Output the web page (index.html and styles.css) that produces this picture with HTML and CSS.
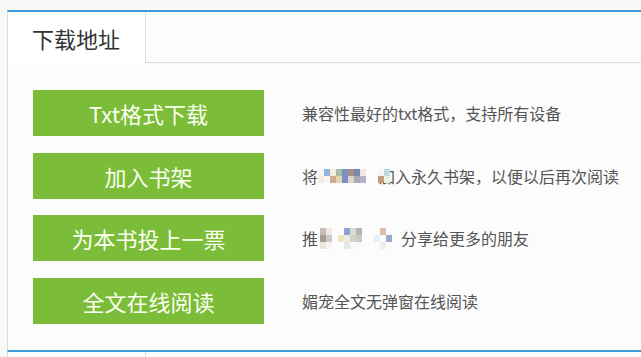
FILE: index.html
```html
<!DOCTYPE html>
<html lang="zh-CN">
<head>
<meta charset="utf-8">
<title>下载地址</title>
<link rel="stylesheet" href="styles.css">
</head>
<body>
<div class="panel first">
  <div class="tabs"><div class="tab">下载地址</div></div>
  <div class="content">
    <div class="row">
      <a class="btn" href="#">Txt格式下载</a>
      <span class="desc">兼容性最好的txt格式，支持所有设备</span>
    </div>
    <div class="row">
      <a class="btn" href="#">加入书架</a>
      <span class="desc"><span>将</span><span class="mosaic m-a">
        <i class="c-f6"></i><i class="c-8d"></i><i class="c-f2"></i><i class="c-a9"></i><i class="c-79"></i><i class="c-a3"></i><i class="c-7a"></i><i class="c-ed"></i><i class="c-ff"></i><i class="c-ff"></i><i class="c-f6"></i><i class="c-bc"></i>
        <i class="c-f4"></i><i class="c-f8"></i><i class="c-d2"></i><i class="c-e6"></i><i class="c-78"></i><i class="c-da"></i><i class="c-a8"></i><i class="c-b2"></i><i class="c-ff"></i><i class="c-ff"></i><i class="c-c9"></i><i class="c-e9"></i>
      </span><span>加入永久书架，以便以后再次阅读</span></span>
    </div>
    <div class="row">
      <a class="btn" href="#">为本书投上一票</a>
      <span class="desc"><span>推</span><span class="mosaic m-b">
        <i class="c-c0"></i><i class="c-ec"></i><i class="c-fb"></i><i class="c-fc"></i><i class="c-8e"></i><i class="c-dc"></i><i class="c-b4"></i><i class="c-ff"></i><i class="c-ff"></i><i class="c-fc"></i><i class="c-dcb"></i><i class="c-fc"></i><i class="c-ff"></i>
        <i class="c-a89"></i><i class="c-cf"></i><i class="c-fb"></i><i class="c-f2e"></i><i class="c-ece"></i><i class="c-d2c"></i><i class="c-ca"></i><i class="c-ff"></i><i class="c-ff"></i><i class="c-de"></i><i class="c-fc"></i><i class="c-9a"></i><i class="c-ff"></i>
        <i class="c-e8"></i><i class="c-f4g"></i><i class="c-fb"></i><i class="c-fc"></i><i class="c-e6g"></i><i class="c-fa"></i><i class="c-fa"></i><i class="c-ff"></i><i class="c-ff"></i><i class="c-fc"></i><i class="c-ee"></i><i class="c-fc"></i><i class="c-ff"></i>
      </span><span>分享给更多的朋友</span></span>
    </div>
    <div class="row">
      <a class="btn" href="#">全文在线阅读</a>
      <span class="desc">媚宠全文无弹窗在线阅读</span>
    </div>
  </div>
</div>
<div class="panel">
  <div class="tabs"><div class="tab"></div></div>
</div>
</body>
</html>
```

FILE: styles.css
```css
html, body {
  margin: 0;
  padding: 0;
}
body {
  background: #f8f8f8;
  font-family: "Noto Sans CJK SC", "Microsoft YaHei", sans-serif;
  overflow: hidden;
}
.panel {
  margin-left: 7px;
  border-left: 1px solid #dcdcdc;
  border-top: 2px solid #3b9ad8;
  background: #fcfcfc;
}
.panel.first {
  margin-top: 10px;
}
.tabs {
  display: flex;
  height: 50px;
  border-bottom: 1px solid #dddddd;
  background: #fdfdfd;
}
.tab {
  box-sizing: border-box;
  width: 138px;
  height: 51px;
  margin-bottom: -1px;
  padding-left: 24px;
  background: #ffffff;
  border-right: 1px solid #dddddd;
  font-size: 22px;
  line-height: 52px;
  color: #333333;
}
.content {
  display: flex;
  flex-direction: column;
  gap: 16.67px;
  padding: 27px 0 26px 25px;
}
.row {
  display: flex;
  align-items: center;
}
.btn {
  display: flex;
  align-items: center;
  justify-content: center;
  flex: none;
  width: 231px;
  height: 46px;
  background: #7bbd38;
  color: #fbfff2;
  font-size: 22px;
  line-height: 1;
  text-decoration: none;
}
.desc {
  display: flex;
  align-items: center;
  margin-left: 38px;
  font-size: 16px;
  line-height: 20px;
  color: #555555;
  white-space: nowrap;
}
.mosaic {
  display: grid;
  grid-auto-rows: 7px;
  position: relative;
  z-index: 1;
}
.mosaic i {
  display: block;
}
.m-a {
  grid-template-columns: repeat(12, 6px);
  margin-right: -11px;
  margin-top: 1px;
}
.m-b {
  grid-template-columns: repeat(13, 6px);
  margin-left: 2px;
  margin-right: 3px;
  margin-top: 1px;
}
.c-ff { background: #fcfcfc; }
.c-fb { background: #fbfbfb; }
.c-fc { background: #fcfcfc; }
.c-fa { background: #f8f8f8; }
.c-f6 { background: #f4f4f4; }
.c-f4 { background: #f2ebe6; }
.c-f8 { background: #f6f6f6; }
.c-8d { background: #8db5de; }
.c-f2 { background: #f2ecd8; }
.c-a9 { background: #a9bba9; }
.c-79 { background: #7990c2; }
.c-a3 { background: #a39088; }
.c-7a { background: #7a88aa; }
.c-ed { background: #ede8e4; }
.c-bc { background: #bcd8e2; }
.c-d2 { background: #d2aa90; }
.c-e6 { background: #e6d6ae; }
.c-78 { background: #7890c6; }
.c-da { background: #dad2cc; }
.c-a8 { background: #a8a8b9; }
.c-b2 { background: #b2b2cd; }
.c-c9 { background: #c99a7a; }
.c-e9 { background: #e9f1e1; }
.c-c0 { background: #c8bcb4; }
.c-ec { background: #ece8e6; }
.c-8e { background: #8ea2d2; }
.c-dc { background: #dcdcd4; }
.c-b4 { background: #b4b4ac; }
.c-dcb { background: #dcbcac; }
.c-a89 { background: #a89c94; }
.c-cf { background: #cfc8c2; }
.c-f2e { background: #f2e2c2; }
.c-ece { background: #ecece2; }
.c-d2c { background: #d2d2c8; }
.c-ca { background: #cacac2; }
.c-de { background: #def4f4; }
.c-9a { background: #9aaaca; }
.c-e8 { background: #e8e4e0; }
.c-f4g { background: #f4f4f4; }
.c-e6g { background: #e6e6e6; }
.c-ee { background: #eeeeee; }
```
